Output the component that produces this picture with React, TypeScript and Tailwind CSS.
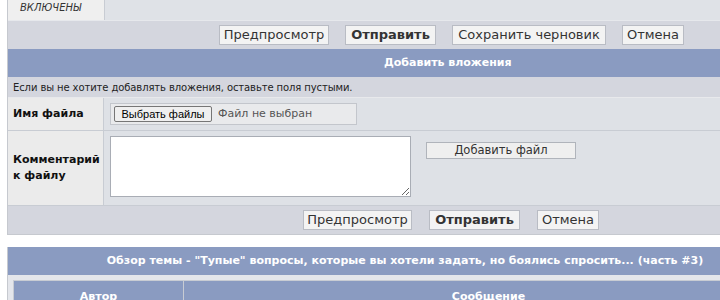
import React from "react";

const F = { fontFamily: '"DejaVu Sans", Verdana, sans-serif' };

function Btn({ children, bold, w }: { children: React.ReactNode; bold?: boolean; w: string }) {
  return (
    <div
      className={`${w} h-[20px] flex items-center justify-center border border-[#b9bcc4] bg-[#f3f3f3] text-[13px] text-[#333] ${bold ? "font-bold" : ""}`}
    >
      {children}
    </div>
  );
}

export default function App() {
  return (
    <div className="w-[720px] h-[300px] overflow-hidden bg-white" style={F}>
      {/* table 1 */}
      <div className="ml-[7px] w-[880px] border-l border-[#c6c9cf] bg-[#d4d6de]">
        {/* row 1 */}
        <div className="flex h-[21px] border-b border-[#e6e8ec]">
          <div className="w-[96px] bg-[#efefef] pl-[12px] pt-[2px] text-[10px] italic text-[#333] leading-[12px]">
            ВКЛЮЧЕНЫ
          </div>
          <div className="flex-1 border-l border-[#c8ccd3] bg-[#dfe2e7]" />
        </div>
        {/* buttons */}
        <div className="h-[28px] flex items-start pt-[4px] pl-[211px] gap-[16px]">
          <Btn w="w-[110px]">Предпросмотр</Btn>
          <Btn w="w-[91px]" bold>Отправить</Btn>
          <Btn w="w-[154px]">Сохранить черновик</Btn>
          <Btn w="w-[62px]">Отмена</Btn>
        </div>
        {/* header */}
        <div className="h-[28px] bg-[#8a9bc1] flex items-center pl-[376px] text-[11px] font-bold text-white">
          Добавить вложения
        </div>
        {/* hint */}
        <div className="h-[21px] flex items-center pl-[5px] text-[10px] tracking-[-0.1px] text-[#222] border-b border-[#e8e9ec]">
          Если вы не хотите добавлять вложения, оставьте поля пустыми.
        </div>
        {/* file name */}
        <div className="flex h-[33px] border-b border-[#c8ccd3]">
          <div className="w-[95px] bg-[#ebebeb] flex items-center pl-[5px] text-[11px] font-bold text-[#111]">
            Имя файла
          </div>
          <div className="flex-1 border-l border-[#c8ccd3] bg-[#dee1e6] pl-[6px] pt-[5px]">
            <div className="w-[247px] h-[22px] border border-[#c3c6cc] bg-[#e9eaec] flex items-center pl-[3px]">
              <div
                className="h-[16px] w-[98px] flex items-center justify-center border border-[#767676] rounded-[2px] bg-[#efefef] text-[11px] text-black"
                style={{ fontFamily: '"Liberation Sans", Arial, sans-serif' }}
              >
                Выбрать файлы
              </div>
              <span className="ml-[6px] text-[11px] text-[#555]">Файл не выбран</span>
            </div>
          </div>
        </div>
        {/* comment */}
        <div className="flex h-[75px] border-b border-[#c8ccd3]">
          <div className="w-[95px] bg-[#ebebeb] flex items-center pl-[5px] text-[11px] font-bold text-[#111] leading-[16px]">
            Комментарий
            <br />
            к файлу
          </div>
          <div className="flex-1 border-l border-[#c8ccd3] bg-[#dee1e6] flex items-start pl-[6px] pt-[5px]">
            <textarea
              className="w-[301px] h-[61px] bg-white border border-[#a9adb5] outline-none"
              style={{ resize: "both" }}
              defaultValue=""
            />
            <div className="ml-[15px] mt-[6px] w-[150px] h-[17px] border border-[#b0b4bb] bg-[#efefef] flex items-center justify-center text-[11.5px] text-[#333]">
              Добавить файл
            </div>
          </div>
        </div>
        {/* buttons 2 */}
        <div className="h-[29px] flex items-start pt-[4px] pl-[295px] gap-[17px] border-b border-[#c6c9cf]">
          <Btn w="w-[109px]">Предпросмотр</Btn>
          <Btn w="w-[91px]" bold>Отправить</Btn>
          <Btn w="w-[62px]">Отмена</Btn>
        </div>
      </div>

      {/* table 2 */}
      <div className="mt-[12px] ml-[7px] w-[795px] border-l border-[#c6c9cf] bg-[#e4e6eb]">
        <div className="h-[28px] bg-[#8a9bc1] flex items-center justify-center text-[11px] font-bold text-white whitespace-nowrap">
          Обзор темы - "Тупые" вопросы, которые вы хотели задать, но боялись спросить... (часть #3)
        </div>
        <div className="pt-[5px] pl-[5px]">
          <div className="flex w-[780px] h-[30px] border-l border-t border-[#c8ccd3] bg-[#8a9bc1] text-[11px] font-bold text-white">
            <div className="w-[169px] flex justify-center pt-[8px]">Автор</div>
            <div className="flex-1 border-l border-[#c8ccd3] flex justify-center pt-[8px]">Сообщение</div>
          </div>
        </div>
      </div>
    </div>
  );
}
